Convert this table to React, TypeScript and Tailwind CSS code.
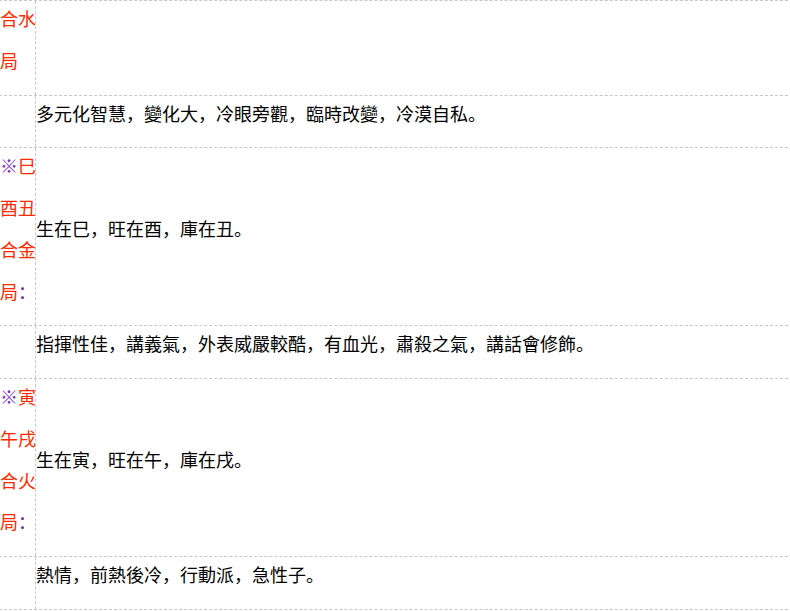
import React from 'react';

type Row = {
  label?: { mark?: string; lines: string[]; colon?: boolean };
  text?: string;
};

const rows: Row[] = [
  { label: { lines: ['合水', '局'] } },
  { text: '多元化智慧，變化大，冷眼旁觀，臨時改變，冷漠自私。' },
  { label: { mark: '※', lines: ['巳', '酉丑', '合金', '局'], colon: true }, text: '生在巳，旺在酉，庫在丑。' },
  { text: '指揮性佳，講義氣，外表威嚴較酷，有血光，肅殺之氣，講話會修飾。' },
  { label: { mark: '※', lines: ['寅', '午戌', '合火', '局'], colon: true }, text: '生在寅，旺在午，庫在戌。' },
  { text: '熱情，前熱後冷，行動派，急性子。' },
];

const Label: React.FC<{ label: NonNullable<Row['label']> }> = ({ label }) => {
  const last = label.lines.length - 1;
  return (
    <div className="-mt-[3px] whitespace-nowrap text-[#ff2a00]">
      {label.lines.map((line, i) => (
        <div key={i}>
          {i === 0 && label.mark && <span className="text-[#7a34c8]">{label.mark}</span>}
          {line}
          {i === last && label.colon && <span className="text-[#6a1fa8]">：</span>}
        </div>
      ))}
    </div>
  );
};

const App: React.FC = () => {
  return (
    <div
      className="min-h-[611px] bg-white overflow-hidden text-[18px] leading-[41.75px] text-black"
      style={{ fontFamily: '"Noto Sans CJK SC", "Noto Sans CJK TC", sans-serif' }}
    >
      <div className="w-[794px] -ml-px border-b border-dashed border-[#c8c8c8]">
        {rows.map((row, i) => (
          <div key={i} className="flex border-t border-dashed border-[#c8c8c8]">
            <div className="w-[36px] shrink-0 border-l border-dashed border-[#c8c8c8] pb-[13px]">
              {row.label && <Label label={row.label} />}
            </div>
            <div className="flex-1 flex items-center border-l border-dashed border-[#c8c8c8] pb-[13px]">
              {row.text && <div className="-mt-[3px]">{row.text}</div>}
            </div>
          </div>
        ))}
      </div>
    </div>
  );
};

export default App;
